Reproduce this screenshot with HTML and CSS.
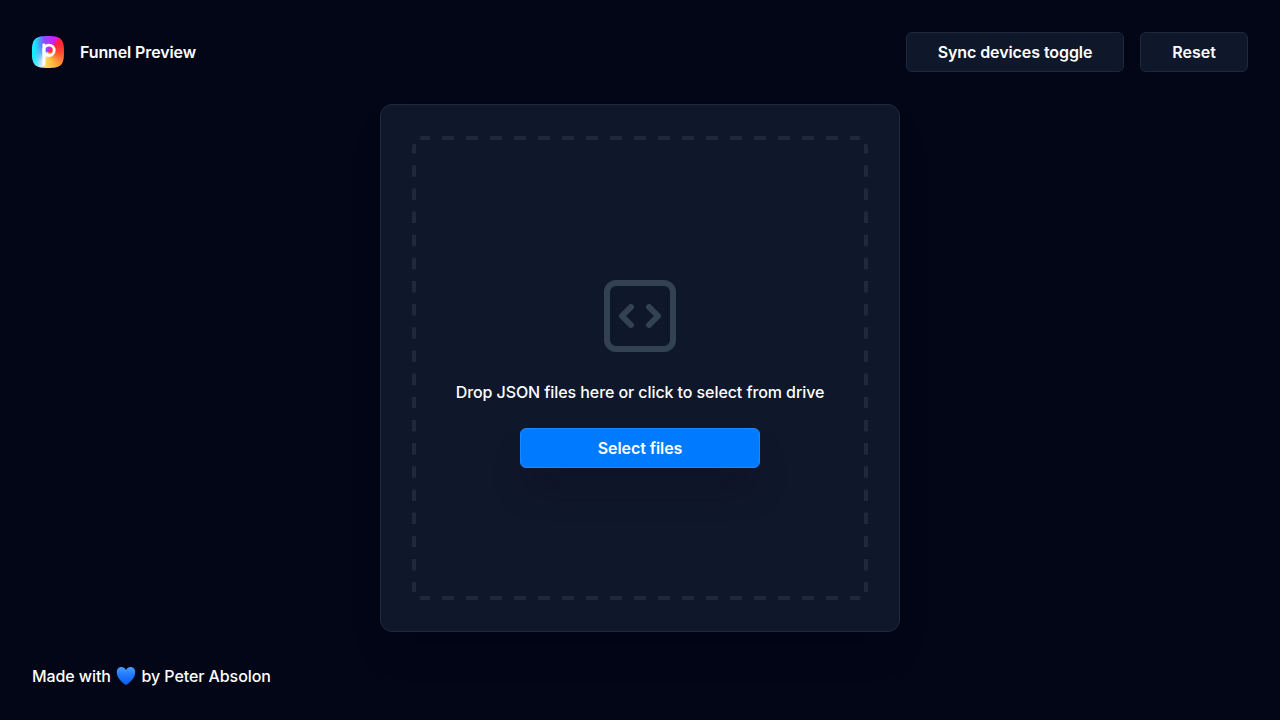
FILE: index.html
```html
<!DOCTYPE html>
<html lang="en">
<head>
<meta charset="utf-8">
<title>Funnel Preview</title>
<link rel="stylesheet" href="styles.css">
</head>
<body>
<div class="app">
  <header class="header">
    <div class="brand">
      <svg class="logo" width="32" height="32" viewBox="0 0 32 32" aria-hidden="true">
        <defs>
          <clipPath id="tile"><path d="M16 0C29 0 32 3 32 16S29 32 16 32 0 29 0 16 3 0 16 0Z"/></clipPath>
        </defs>
        <foreignObject width="32" height="32" clip-path="url(#tile)"><div class="logo-fill"></div></foreignObject>
        <path d="M10.400 7.600H13.300V30L10.400 30Z" fill="#fff"/>
        <circle cx="17" cy="14.300" r="5.200" fill="none" stroke="#fff" stroke-width="2.900"/>
      </svg>
      <span class="brand-name">Funnel Preview</span>
    </div>
    <nav class="actions">
      <button class="button sync">Sync devices toggle</button>
      <button class="button reset">Reset</button>
    </nav>
  </header>
  <main class="main">
    <section class="card">
      <div class="dropzone">
        <svg class="dashes" width="456" height="464" viewBox="0 0 456 464" fill="none" stroke="#1e293b" stroke-width="4" aria-hidden="true">
          <clipPath id="zone">
            <rect x="8" y="0" width="440" height="464" rx="1.500"/>
            <rect x="0" y="8" width="456" height="448" rx="1.500"/>
          </clipPath>
          <g clip-path="url(#zone)">
            <path d="M6 2H450M6 462H450" stroke-dasharray="12 12"/>
            <path d="M2 6V458M454 6V458" stroke-dasharray="11.580 11.580"/>
          </g>
        </svg>
        <svg class="code-icon" width="96" height="96" viewBox="0 0 24 24" fill="#334155" aria-hidden="true">
          <path fill-rule="evenodd" d="M6 3H18A3 3 0 0 1 21 6V18A3 3 0 0 1 18 21H6A3 3 0 0 1 3 18V6A3 3 0 0 1 6 3ZM6 4.500A1.500 1.500 0 0 0 4.500 6V18A1.500 1.500 0 0 0 6 19.500H18A1.500 1.500 0 0 0 19.500 18V6A1.500 1.500 0 0 0 18 4.500Z"/>
          <path d="M9.750 9.750L7.500 12L9.750 14.250M14.250 9.750L16.500 12L14.250 14.250" fill="none" stroke="#334155" stroke-width="1.500" stroke-linecap="round" stroke-linejoin="round"/>
        </svg>
        <p class="hint">Drop JSON files here or click to select from drive</p>
        <button class="button primary">Select files</button>
      </div>
    </section>
  </main>
  <footer class="footer">
    <span>Made with</span>
    <svg class="heart" width="20" height="18" viewBox="0 0 20 18" aria-label="love">
      <defs>
        <linearGradient id="blue" x1="0" y1="0" x2="0" y2="1"><stop offset="0" stop-color="#4ba0ff"/><stop offset=".4" stop-color="#247cff"/><stop offset="1" stop-color="#0b5df0"/></linearGradient>
      </defs>
      <path d="M10 3C11.200 .8 12.900 0 14.500 0C17.500 0 19.200 2.200 19.200 5.200C19.200 10.500 14.200 15.500 10 18C5.800 15.500 .8 10.500 .8 5.200C.8 2.200 2.500 0 5.500 0C7.100 0 8.800 .8 10 3Z" fill="url(#blue)"/>
    </svg>
    <span>by Peter Absolon</span>
  </footer>
</div>
</body>
</html>
```
FILE: styles.css
```css
* { box-sizing: border-box; }
body {
  margin: 0;
  background: #020617;
  color: #fff;
  font: 500 16px/24px Inter, sans-serif;
  letter-spacing: -.08px;
}
.app {
  height: 720px;
  display: flex;
  flex-direction: column;
  gap: 32px;
  padding: 32px;
}
.header { display: flex; justify-content: space-between; height: 40px; }
.brand { display: flex; align-items: center; gap: 16px; }
.brand-name { font-weight: 600; letter-spacing: -.12px; }
.logo { display: block; }
.logo-fill {
  width: 32px;
  height: 32px;
  background:
    linear-gradient(95deg, #10f0f8 8%, rgba(40, 220, 255, 0) 36%),
    conic-gradient(from 0deg at 50% 50%, #a83cff 0deg, #d21bf0 32deg, #ff2040 42deg, #ff4030 85deg, #ff7a35 120deg, #ffb83c 155deg, #ffd75a 190deg, #dfeaff 208deg, #7c9cff 265deg, #6c5cff 315deg, #a83cff 360deg);
}
.actions { display: flex; gap: 16px; }
.button {
  height: 40px;
  padding: 0;
  border: 1px solid #1e293b;
  border-radius: 6px;
  background: #0f172a;
  color: #fff;
  font: 600 16px/24px Inter, sans-serif;
  letter-spacing: -.08px;
}
.sync { width: 218px; }
.reset { width: 108px; letter-spacing: 0; }
.main { display: flex; justify-content: center; }
.card {
  width: 520px;
  height: 528px;
  padding: 31px;
  border: 1px solid #1e293b;
  border-radius: 12px;
  background: #0f172a;
  box-shadow: 0 24px 36px -16px rgba(1, 2, 14, .4);
}
.dropzone {
  position: relative;
  height: 464px;
  display: flex;
  flex-direction: column;
  align-items: center;
  padding-top: 132px;
}
.dashes { position: absolute; inset: 0; }
.code-icon { display: block; }
.hint { margin: 16px 0 24px; white-space: nowrap; }
.primary {
  width: 240px;
  border-color: #1a88ff;
  background: #007aff;
  box-shadow: 0 25px 34px -12px rgba(15, 14, 29, .5);
}
.footer { display: flex; align-items: center; gap: 5.300px; height: 24px; }
.heart { display: block; }
```
